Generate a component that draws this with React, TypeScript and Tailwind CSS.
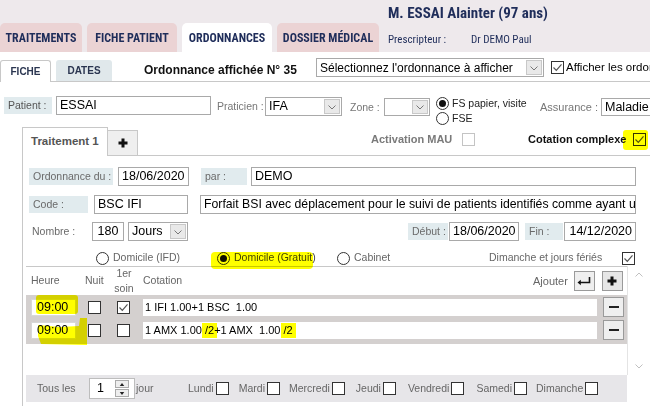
import React from "react";
import { clsx, type ClassValue } from "clsx";
import { twMerge } from "tailwind-merge";

const cn = (...inputs: ClassValue[]) => twMerge(clsx(inputs));

const SANS = "font-['Liberation_Sans',Arial,sans-serif]";
const COND = "font-['Roboto_Condensed','Liberation_Sans_Narrow','DejaVu_Sans_Condensed',sans-serif]";

function Check({ checked, className }: { checked?: boolean; className?: string }) {
  return (
    <span
      className={cn(
        "flex h-[13px] w-[13px] shrink-0 items-center justify-center border border-[#333] bg-white",
        className
      )}
    >
      {checked && (
        <svg viewBox="0 0 11 11" className="h-[11px] w-[11px]">
          <path d="M1.5 5.5 L4.3 8.3 L9.5 2.3" fill="none" stroke="#555" strokeWidth="1.2" />
        </svg>
      )}
    </span>
  );
}

function Radio({ on }: { on?: boolean }) {
  return (
    <span className="flex h-[13px] w-[13px] shrink-0 items-center justify-center rounded-full border border-[#333] bg-white">
      {on && <span className="h-[7px] w-[7px] rounded-full bg-[#111]" />}
    </span>
  );
}

function Lbl({ className, children }: { className?: string; children: React.ReactNode }) {
  return (
    <span
      className={cn(
        "flex h-[17px] shrink-0 items-center whitespace-nowrap bg-[#E1EBEE] pl-[4px] text-[10.5px] text-[#6a6a6a]",
        className
      )}
    >
      {children}
    </span>
  );
}

function Inp({ className, children }: { className?: string; children?: React.ReactNode }) {
  return (
    <span
      className={cn(
        "flex h-[19px] shrink-0 items-center overflow-hidden whitespace-pre border border-[#a9a9a9] bg-white px-[3px] text-[12.5px] text-black",
        className
      )}
    >
      {children}
    </span>
  );
}

function Chevron({ up }: { up?: boolean }) {
  return (
    <svg viewBox="0 0 10 10" className="h-[10px] w-[10px]">
      <path
        d={up ? "M1.5 6.5 L5 3 L8.5 6.5" : "M1.5 3.5 L5 7 L8.5 3.5"}
        fill="none"
        stroke="currentColor"
        strokeWidth="1"
      />
    </svg>
  );
}

function Select({ className, children }: { className?: string; children?: React.ReactNode }) {
  return (
    <span
      className={cn(
        "flex h-[19px] shrink-0 items-stretch overflow-hidden border border-[#a9a9a9] bg-white text-[12.5px] text-black",
        className
      )}
    >
      <span className="flex flex-1 items-center overflow-hidden whitespace-nowrap px-[3px]">{children}</span>
      <span className="m-px flex w-[16px] items-center justify-center border border-[#c8c8c8] bg-[#e9e9e9] text-[#777]">
        <Chevron />
      </span>
    </span>
  );
}

function Plus() {
  return (
    <svg viewBox="0 0 10 10" className="h-[10px] w-[10px]">
      <rect x="3.5" y="0.5" width="3" height="9" fill="#111" />
      <rect x="0.5" y="3.5" width="9" height="3" fill="#111" />
    </svg>
  );
}

function SmallBtn({ children, className }: { children: React.ReactNode; className?: string }) {
  return (
    <span
      className={cn(
        "flex h-[20px] w-[21px] shrink-0 items-center justify-center border border-[#9a9a9a] bg-[#EFEFEF]",
        className
      )}
    >
      {children}
    </span>
  );
}

// yellow marker stroke laid over a piece of text
function Mark({ children }: { children: React.ReactNode }) {
  return (
    <span className="relative">
      {children}
      <span className="absolute -inset-x-[3px] -inset-y-[2px] rounded-[2px] bg-[#FFFF00] mix-blend-multiply" />
    </span>
  );
}

const topTabs = [
  { label: "TRAITEMENTS", w: "w-[82px]" },
  { label: "FICHE PATIENT", w: "w-[90px]" },
  { label: "ORDONNANCES", w: "w-[90px]", active: true },
  { label: "DOSSIER MÉDICAL", w: "w-[102px]" },
];

const days = [
  { d: "Lundi", ml: "ml-[28px]" },
  { d: "Mardi", ml: "ml-[10px]" },
  { d: "Mercredi", ml: "ml-[9px]" },
  { d: "Jeudi", ml: "ml-[11px]" },
  { d: "Vendredi", ml: "ml-[12px]" },
  { d: "Samedi", ml: "ml-[12px]" },
  { d: "Dimanche", ml: "ml-[9px]" },
];

function Row({ night, first, children }: { night?: boolean; first?: boolean; children: React.ReactNode }) {
  return (
    <div className="flex h-[20px] items-center *:shrink-0">
      <Inp className="ml-[5px] h-[17px] w-[45px] border-[#d8d8d8] px-[5px]">09:00</Inp>
      <Check checked={night} className="ml-[12px]" />
      <Check checked={first} className="ml-[16px]" />
      <Inp className="ml-[13px] h-[17px] w-[454px] border-white px-[1px] text-[11px]">{children}</Inp>
      <SmallBtn className="ml-[6px]">
        <span className="h-[2px] w-[10px] bg-[#222]" />
      </SmallBtn>
    </div>
  );
}

export default function App() {
  return (
    <div className={cn("relative h-[406px] w-[650px] overflow-hidden bg-white text-black", SANS)}>
      {/* header */}
      <div className="flex h-[52px] bg-[#EEE9EC] *:shrink-0">
        <div className="flex items-end gap-[5px]">
          {topTabs.map((t) => (
            <div
              key={t.label}
              className={cn(
                "flex h-[29px] items-center justify-center rounded-t-[5px] text-[12px] font-bold text-[#1F2D5A]",
                COND,
                t.w,
                t.active ? "bg-white" : "bg-[#EBD3D4]"
              )}
            >
              {t.label}
            </div>
          ))}
        </div>
        <div className={cn("ml-[9px] flex flex-col text-[#1F2D5A]", COND)}>
          <div className="mt-[4px] whitespace-nowrap text-[15px] font-bold leading-[19px]">
            M. ESSAI Alainter (97 ans)
          </div>
          <div className="mt-[10px] flex whitespace-nowrap text-[11px] leading-[13px]">
            <span className="w-[83px]">Prescripteur :</span>
            <span>Dr DEMO Paul</span>
          </div>
        </div>
      </div>

      {/* sub tabs */}
      <div className="flex h-[30px] items-start border-b border-[#C8C8C8] *:shrink-0">
        <div className="mt-[8px] flex h-[22px] w-[51px] items-center justify-center rounded-t-[3px] border border-b-0 border-[#C8C8C8] bg-white text-[10px] font-bold text-[#2A3550]">
          FICHE
        </div>
        <div className="ml-[5px] mt-[8px] flex h-[21px] w-[56px] items-center justify-center rounded-t-[3px] bg-[#E0E8EB] text-[10px] font-bold text-[#2A3550]">
          DATES
        </div>
        <div className="ml-[32px] mt-[9px] w-[172px] whitespace-nowrap text-[12px] font-bold leading-[18px] text-[#111]">
          Ordonnance affichée N° 35
        </div>
        <Select className="mt-[6px] w-[228px] text-[12px]">Sélectionnez l'ordonnance à afficher</Select>
        <Check checked className="ml-[7px] mt-[9px]" />
        <span className="ml-[2px] mt-[7px] whitespace-nowrap text-[11.5px] leading-[16px]">
          Afficher les ordonnances
        </span>
      </div>

      {/* patient row */}
      <div className="flex h-[45px] items-start whitespace-nowrap *:shrink-0">
        <Lbl className="ml-[4px] mt-[15px] w-[48px] text-[#555]">Patient :</Lbl>
        <Inp className="ml-[4px] mt-[14px] w-[155px]">ESSAI</Inp>
        <span className="ml-[6px] mt-[15px] w-[48px] text-[10.5px] leading-[19px] text-[#777]">Praticien :</span>
        <Select className="mt-[15px] w-[77px]">IFA</Select>
        <span className="ml-[8px] mt-[16px] w-[34px] text-[10.5px] leading-[18px] text-[#777]">Zone :</span>
        <Select className="mt-[16px] h-[18px] w-[46px]" />
        <div className="ml-[6px] mt-[15px] flex w-[104px] flex-col gap-[2px] text-[10.5px] leading-[13px] text-[#222]">
          <span className="flex items-center gap-[3px]">
            <Radio on />
            FS papier, visite
          </span>
          <span className="flex items-center gap-[3px]">
            <Radio />
            FSE
          </span>
        </div>
        <span className="mt-[16px] w-[61px] text-[11px] leading-[18px] text-[#777]">Assurance :</span>
        <Inp className="mt-[16px] h-[18px] w-[60px]">Maladie</Inp>
      </div>

      {/* traitement frame */}
      <div className="ml-[22px] flex h-[279px] flex-col border-l border-[#C8C8C8]">
        <div className="flex h-[28px] items-start whitespace-nowrap *:shrink-0">
          <div className="relative z-10 flex h-[29px] w-[85px] items-center border-r border-t border-[#C8C8C8] bg-white pl-[8px] text-[11.5px] font-bold text-[#555]">
            Traitement 1
          </div>
          <div className="mt-[3px] flex h-[25px] w-[30px] items-center justify-center border-r border-t border-[#C8C8C8] bg-[#EFEFEF]">
            <Plus />
          </div>
          <span className="ml-[233px] mt-[4px] w-[91px] text-[11px] font-bold leading-[16px] text-[#7a7a7a]">
            Activation MAU
          </span>
          <Check className="mt-[6px] border-[#c4c4c4]" />
          <span className="ml-[53px] mt-[4px] w-[105px] text-[11px] font-bold leading-[16px] text-[#111]">
            Cotation complexe
          </span>
          <Check checked className="mt-[6px]" />
        </div>

        <div className="flex-1 border-t border-[#C8C8C8]">
          <div className="mt-[11px] flex items-center *:shrink-0">
            <Lbl className="ml-[6px] w-[84px]">Ordonnance du :</Lbl>
            <Inp className="ml-[5px] w-[71px]">18/06/2020</Inp>
            <Lbl className="ml-[12px] w-[46px]">par :</Lbl>
            <Inp className="ml-[4px] w-[385px]">DEMO</Inp>
          </div>
          <div className="mt-[9px] flex items-center *:shrink-0">
            <Lbl className="ml-[6px] w-[59px]">Code :</Lbl>
            <Inp className="ml-[6px] w-[94px]">BSC IFI</Inp>
            <Inp className="ml-[12px] w-[436px] text-[12.25px]">
              Forfait BSI avec déplacement pour le suivi de patients identifiés comme ayant une dépendance
            </Inp>
          </div>
          <div className="mt-[8px] flex items-center *:shrink-0">
            <span className="ml-[9px] w-[60px] text-[10.5px] text-[#6a6a6a]">Nombre :</span>
            <Inp className="w-[32px] justify-center">180</Inp>
            <Select className="ml-[4px] w-[60px]">Jours</Select>
            <Lbl className="ml-[220px] w-[40px]">Début :</Lbl>
            <Inp className="ml-[1px] w-[70px]">18/06/2020</Inp>
            <Lbl className="ml-[6px] w-[38px]">Fin :</Lbl>
            <Inp className="ml-[1px] w-[72px] justify-end">14/12/2020</Inp>
          </div>
          <div className="mt-[9px] flex h-[16px] items-center whitespace-nowrap text-[10.5px] text-[#666] *:shrink-0">
            <span className="ml-[73px] flex w-[121px] items-center gap-[4px]">
              <Radio />
              Domicile (IFD)
            </span>
            <span className="flex w-[120px] items-center gap-[4px] text-[#444]">
              <Radio on />
              Domicile (Gratuit)
            </span>
            <span className="flex w-[152px] items-center gap-[4px]">
              <Radio />
              Cabinet
            </span>
            <span className="w-[133px]">Dimanche et jours fériés</span>
            <Check checked />
          </div>

          {/* table */}
          <div className="ml-[3px] flex *:shrink-0">
            <div className="w-[601px]">
              <div className="flex h-[29px] items-center border-t border-[#C8C8C8] text-[10.5px] text-[#666] *:shrink-0">
                <span className="ml-[5px] w-[54px]">Heure</span>
                <span className="w-[28px]">Nuit</span>
                <span className="flex w-[22px] flex-col items-center leading-[15px]">
                  <span>1er</span>
                  <span>soin</span>
                </span>
                <span className="ml-[8px] w-[390px]">Cotation</span>
                <span className="text-[11px]">Ajouter</span>
                <SmallBtn className="ml-[6px]">
                  <svg viewBox="0 0 14 10" className="h-[10px] w-[14px]">
                    <path d="M12.5 1 V6.5 H2" fill="none" stroke="#111" strokeWidth="1.6" />
                    <path d="M0.5 6.5 L3.8 3.8 V9.2 Z" fill="#111" />
                  </svg>
                </SmallBtn>
                <SmallBtn className="ml-[7px] bg-[#E6E6E6]">
                  <Plus />
                </SmallBtn>
              </div>
              <div className="flex h-[49px] flex-col gap-[3px] bg-[#D4D0CF] pt-[2px]">
                <Row first>1 IFI 1.00+1 BSC  1.00</Row>
                <Row>
                  1 AMX 1.00 <Mark>/2</Mark>+1 AMX  1.00 <Mark>/2</Mark>
                </Row>
              </div>
              <div className="h-[31px]" />
              <div className="flex h-[27px] items-center whitespace-nowrap bg-[#E7E6E9] text-[10.5px] text-[#666] *:shrink-0">
                <span className="ml-[11px] w-[52px]">Tous les</span>
                <span className="flex h-[21px] w-[46px] items-center border border-[#bdbdbd] bg-white">
                  <span className="ml-[7px] w-[18px] text-[12.5px] text-black">1</span>
                  <span className="flex flex-col gap-px">
                    <span className="flex h-[8px] w-[14px] items-center justify-center border border-[#aaa] bg-[#eee]">
                      <svg viewBox="0 0 6 4" className="h-[3px] w-[6px]">
                        <path d="M0 4 L3 0 L6 4 Z" fill="#222" />
                      </svg>
                    </span>
                    <span className="flex h-[8px] w-[14px] items-center justify-center border border-[#aaa] bg-[#eee]">
                      <svg viewBox="0 0 6 4" className="h-[3px] w-[6px]">
                        <path d="M0 0 L3 4 L6 0 Z" fill="#222" />
                      </svg>
                    </span>
                  </span>
                </span>
                <span className="ml-[1px] w-[24px]">jour</span>
                {days.map((x) => (
                  <span key={x.d} className={cn("flex items-center gap-[2px]", x.ml)}>
                    {x.d}
                    <Check />
                  </span>
                ))}
              </div>
            </div>
            <div className="flex h-[109px] w-[23px] flex-col items-center justify-between border-l border-[#e4e4e4] py-[4px] text-[#c0c0c0]">
              <Chevron up />
              <Chevron />
            </div>
          </div>
        </div>
      </div>

      {/* marker highlights drawn over the screenshot */}
      <div className="pointer-events-none absolute inset-0 mix-blend-multiply">
        <span className="absolute left-[623px] top-[130px] h-[20px] w-[25px] rounded-[3px] bg-[#FFFF00]" />
        <span className="absolute left-[211px] top-[252px] h-[17px] w-[102px] rounded-[4px] bg-[#FFFF00]" />
        <span className="absolute left-[36px] top-[295px] h-[19px] w-[42px] rounded-[3px] bg-[#FFFF00]" />
        <svg className="absolute left-0 top-0 h-[406px] w-[650px]" viewBox="0 0 650 406">
          <path d="M38 325 L60 327 L79 326 L80 318 L87 318 L87 345 L41 344 L38 336 Z" fill="#FFFF00" />
        </svg>
      </div>
    </div>
  );
}
